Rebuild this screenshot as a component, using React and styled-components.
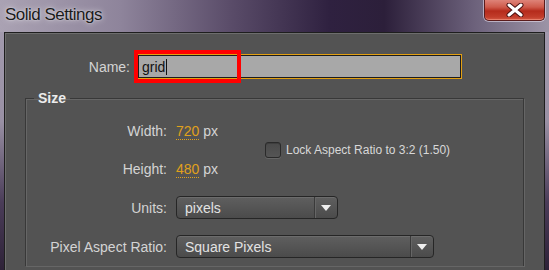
import React from "react";
import styled, { createGlobalStyle } from "styled-components";

const GlobalStyle = createGlobalStyle`
  html, body {
    margin: 0;
    padding: 0;
    background: #2b2035;
    overflow: hidden;
  }
  * {
    box-sizing: border-box;
  }
`;

const Window = styled.div`
  width: 549px;
  height: 270px;
  display: flex;
  flex-direction: column;
  padding: 0 4px;
  overflow: hidden;
  font-family: "Liberation Sans", Arial, sans-serif;
  background: linear-gradient(
    to bottom,
    #a59db0 0%,
    #9990a4 45%,
    #4a3c58 75%,
    #2e2238 100%
  );
`;

const TitleBar = styled.div`
  height: 32px;
  margin: 0 -4px;
  display: flex;
  justify-content: space-between;
  align-items: flex-start;
  background: linear-gradient(
    to right,
    #aaa2b3 0%,
    #8e849b 22%,
    #5a4c69 42%,
    #2f2140 60%,
    #2c1f3a 70%,
    #6b607a 86%,
    #9c94a6 100%
  );
`;

const Title = styled.div`
  padding: 5px 0 0 5px;
  font-size: 17px;
  line-height: 20px;
  letter-spacing: -0.5px;
  color: #1b1b1b;
  text-shadow: 0 0 6px rgba(255, 255, 255, 0.7), 0 0 2px rgba(255, 255, 255, 0.6);
`;

const CloseButton = styled.div`
  width: 61px;
  height: 21px;
  margin-right: 4px;
  display: flex;
  align-items: center;
  justify-content: center;
  border: 1px solid #5a1c1c;
  border-top: none;
  border-radius: 0 0 5px 5px;
  background: linear-gradient(
    to bottom,
    #de8378 0%,
    #cf5b4c 35%,
    #b52b1c 55%,
    #c23d2b 85%,
    #d45a45 100%
  );
  box-shadow: 0 0 0 1px rgba(230, 220, 235, 0.6), inset 0 -1px 0 rgba(255, 170, 150, 0.5);
`;

const Client = styled.div`
  flex: 1;
  border: 1px solid #1e1e1e;
  border-bottom: none;
  background: #535353;
  box-shadow: inset 1px 1px 0 #6d6d6d;
  display: flex;
  flex-direction: column;
`;

const NameRow = styled.div`
  margin-top: 21px;
  display: flex;
  align-items: center;
  gap: 7px;
`;

const Label = styled.div`
  width: ${(p) => p.$width}px;
  flex-shrink: 0;
  text-align: right;
  font-size: 14px;
  color: #d4d4d4;
  white-space: nowrap;
`;

const NameField = styled.div`
  position: relative;
  width: 325px;
  height: 25px;
  display: flex;
  align-items: center;
  padding-left: 4px;
  border: 1px solid #e3a012;
  background: #a8a8a8;
  box-shadow: inset 0 0 0 1px #1c1c1c;
  font-size: 14px;
  color: #111;
`;

const Caret = styled.span`
  display: inline-block;
  width: 1px;
  height: 16px;
  margin-left: 1px;
  background: #111;
`;

const Highlight = styled.div`
  position: absolute;
  left: -4px;
  top: -5px;
  width: 107px;
  height: 33px;
  border: 4px solid #ff0000;
  pointer-events: none;
`;

const Group = styled.fieldset`
  margin: 11px 20px 0 20px;
  padding: 6px 0 0 0;
  min-width: 0;
  border: 1px solid #383838;
  border-bottom: none;
  box-shadow: inset 1px 1px 0 #666, 1px 1px 0 #666;
`;

const Legend = styled.legend`
  margin-left: 8px;
  padding: 0 4px;
  font-size: 14px;
  line-height: 16px;
  font-weight: bold;
  color: #ececec;
`;

const Grid = styled.div`
  display: grid;
  grid-template-columns: 141px 80px 1fr;
  grid-template-rows: 38px 38px 39px 39px;
  column-gap: 9px;
  align-items: center;
`;

const Value = styled.div`
  font-size: 14px;
  color: #d4d4d4;
  white-space: nowrap;
`;

const Number = styled.span`
  color: #e0a11c;
  border-bottom: 1px dotted #e0a11c;
`;

const LockOption = styled.label`
  grid-column: 3;
  grid-row: 1 / span 2;
  display: flex;
  align-items: center;
  gap: 5px;
  font-size: 12px;
  color: #d8d8d8;
`;

const Box = styled.span`
  width: 16px;
  height: 16px;
  border: 1px solid #2a2a2a;
  border-radius: 3px;
  background: linear-gradient(to bottom, #4a4a4a, #555);
  box-shadow: inset 0 1px 0 #3e3e3e, 0 1px 0 #666;
`;

const Select = styled.div`
  grid-column: 2 / span 2;
  width: ${(p) => p.$width}px;
  height: 23px;
  display: flex;
  align-items: center;
  border: 1px solid #262626;
  border-radius: 4px;
  background: linear-gradient(to bottom, #5f5f5f, #4b4b4b);
  box-shadow: inset 0 1px 0 #6c6c6c;
  color: #e2e2e2;
  font-size: 14px;
`;

const SelectText = styled.span`
  flex: 1;
  padding-left: 8px;
`;

const SelectArrow = styled.span`
  width: 23px;
  height: 100%;
  display: flex;
  align-items: center;
  justify-content: center;
  border-left: 1px solid #3a3a3a;
  box-shadow: inset 1px 0 0 #666;
`;

const CloseIcon = () => (
  <svg width="18" height="14" viewBox="0 0 18 14">
    <path d="M3 2 L15 12 M15 2 L3 12" stroke="#4a1010" strokeWidth="5" strokeLinecap="round" />
    <path d="M3 2 L15 12 M15 2 L3 12" stroke="#ffffff" strokeWidth="3" strokeLinecap="round" />
  </svg>
);

const Arrow = () => (
  <svg width="10" height="6" viewBox="0 0 10 6">
    <path d="M0 0 H10 L5 6 Z" fill="#eeeeee" />
  </svg>
);

const App = () => {
  return (
    <Window>
      <GlobalStyle />
      <TitleBar>
        <Title>Solid Settings</Title>
        <CloseButton>
          <CloseIcon />
        </CloseButton>
      </TitleBar>
      <Client>
        <NameRow>
          <Label $width={125}>Name:</Label>
          <NameField>
            grid
            <Caret />
            <Highlight />
          </NameField>
        </NameRow>
        <Group>
          <Legend>Size</Legend>
          <Grid>
            <Label $width={141}>Width:</Label>
            <Value>
              <Number>720</Number> px
            </Value>
            <LockOption>
              <Box />
              Lock Aspect Ratio to 3:2 (1.50)
            </LockOption>
            <Label $width={141}>Height:</Label>
            <Value>
              <Number>480</Number> px
            </Value>
            <Label $width={141}>Units:</Label>
            <Select $width={162}>
              <SelectText>pixels</SelectText>
              <SelectArrow>
                <Arrow />
              </SelectArrow>
            </Select>
            <Label $width={141}>Pixel Aspect Ratio:</Label>
            <Select $width={258}>
              <SelectText>Square Pixels</SelectText>
              <SelectArrow>
                <Arrow />
              </SelectArrow>
            </Select>
          </Grid>
        </Group>
      </Client>
    </Window>
  );
};

export default App;
